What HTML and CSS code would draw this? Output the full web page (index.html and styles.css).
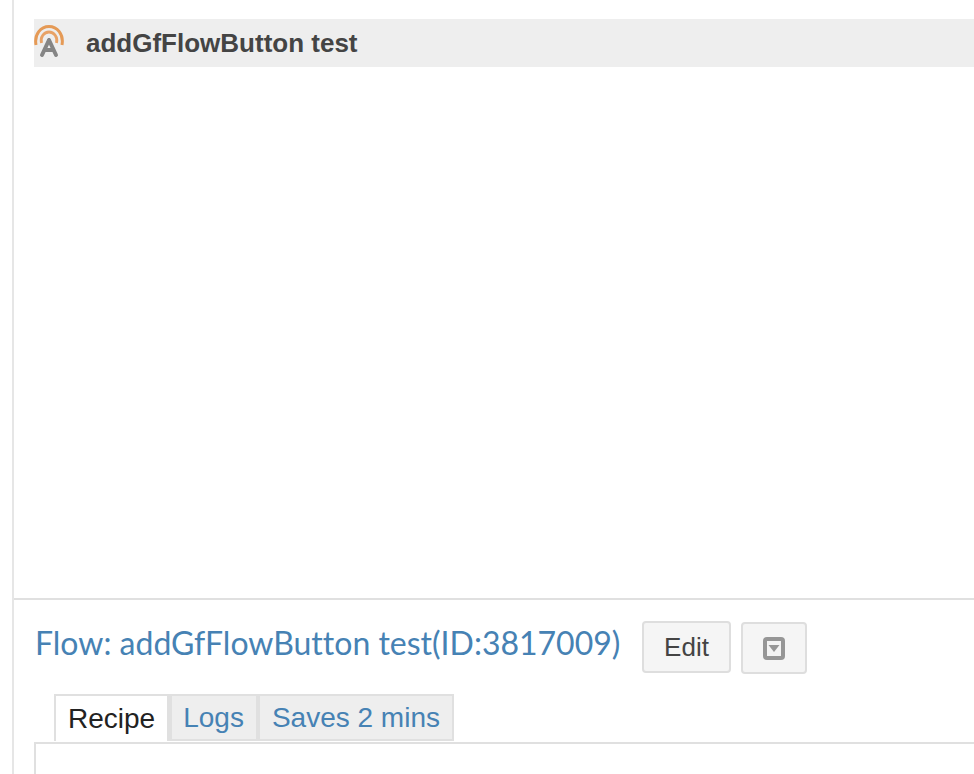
FILE: index.html
```html
<!DOCTYPE html>
<html lang="en">
<head>
<meta charset="utf-8">
<title>addGfFlowButton test</title>
<link rel="stylesheet" href="styles.css">
</head>
<body>
<div class="page">
  <section class="top">
    <div class="bar">
      <svg class="logo" width="34" height="34" viewBox="0 0 34 34" fill="none">
        <path d="M3 20C1 9 8 1.500 16 1.500S31 9 29 20" stroke="#e59a56" stroke-width="3"/>
        <path d="M8.500 18C7 12 11 7 16 7S25 12 23.500 18" stroke="#e8a266" stroke-width="2.800"/>
        <path d="M16 15L9 30M16 15L23 30M11.500 25H20.500" stroke="#858585" stroke-width="4" stroke-linecap="round"/>
      </svg>
      <span class="bar-title">addGfFlowButton test</span>
    </div>
  </section>
  <section class="flow">
    <div class="title-row">
      <h1 class="flow-title">Flow: addGfFlowButton test(ID:3817009)</h1>
      <button class="btn btn-edit">Edit</button>
      <button class="btn btn-menu" aria-label="More">
        <svg width="22" height="23" viewBox="0 0 22 23">
          <rect x="0" y="0" width="22" height="23" rx="4" fill="#969696"/>
          <rect x="4" y="4" width="14" height="15" fill="#f3f3f3"/>
          <path d="M5.500 8H16.500L11 15Z" fill="#969696"/>
        </svg>
      </button>
    </div>
    <nav class="tabs">
      <a class="tab tab-active">Recipe</a>
      <a class="tab">Logs</a>
      <a class="tab">Saves 2 mins</a>
    </nav>
    <div class="panel"></div>
  </section>
</div>
</body>
</html>
```
FILE: styles.css
```css
html, body {
  margin: 0;
  padding: 0;
  height: 100%;
  overflow: hidden;
  background: #fff;
}
.page {
  margin-left: 12px;
  height: 774px;
  border-left: 2px solid #e6e6e6;
  overflow: hidden;
}
.top {
  box-sizing: border-box;
  height: 598px;
  padding: 19px 0 0 20px;
}
.bar {
  display: flex;
  align-items: center;
  height: 48px;
  background: #eeeeee;
}
.logo {
  flex: none;
  margin: -2px 0 0 -1px;
}
.bar-title {
  margin-left: 19px;
  font: bold 26px/30px "Liberation Sans", Arial, sans-serif;
  color: #444444;
}
.flow {
  border-top: 2px solid #e0e0e0;
  padding-left: 20px;
}
.title-row {
  display: flex;
  align-items: flex-start;
  padding-top: 21px;
}
.flow-title {
  width: 586px;
  margin: 0 0 0 1px;
  font: 400 32px/44px Lato, sans-serif;
  font-variant-ligatures: none;
  color: #4682b4;
  white-space: nowrap;
}
.btn {
  box-sizing: border-box;
  background: #f5f5f5;
  border: 2px solid #dedede;
  border-radius: 4px;
  padding: 0;
  display: flex;
  align-items: center;
  justify-content: center;
  font: 400 26px/30px "Liberation Sans", Arial, sans-serif;
  color: #444444;
}
.btn-edit {
  width: 89px;
  height: 52px;
  margin-left: 21px;
}
.btn-menu {
  width: 66px;
  height: 52px;
  margin-left: 10px;
  margin-top: 1px;
}
.tabs {
  display: flex;
  margin: 20px 0 0 20px;
  height: 47px;
  font: 400 28px/40px "Liberation Sans", Arial, sans-serif;
}
.tab {
  box-sizing: border-box;
  height: 47px;
  padding: 0 12.500px 0 11.500px;
  background: #eeeeee;
  border: 2px solid #e0e0e0;
  color: #4682b4;
  display: flex;
  align-items: center;
}
.tab-active {
  padding: 0 11.500px 0 12px;
  background: #fff;
  color: #222222;
  border-bottom: 0;
  border-right-width: 3px;
}
.panel {
  height: 60px;
  margin-top: 1px;
  border: 2px solid #e0e0e0;
  border-right: 0;
}
```
